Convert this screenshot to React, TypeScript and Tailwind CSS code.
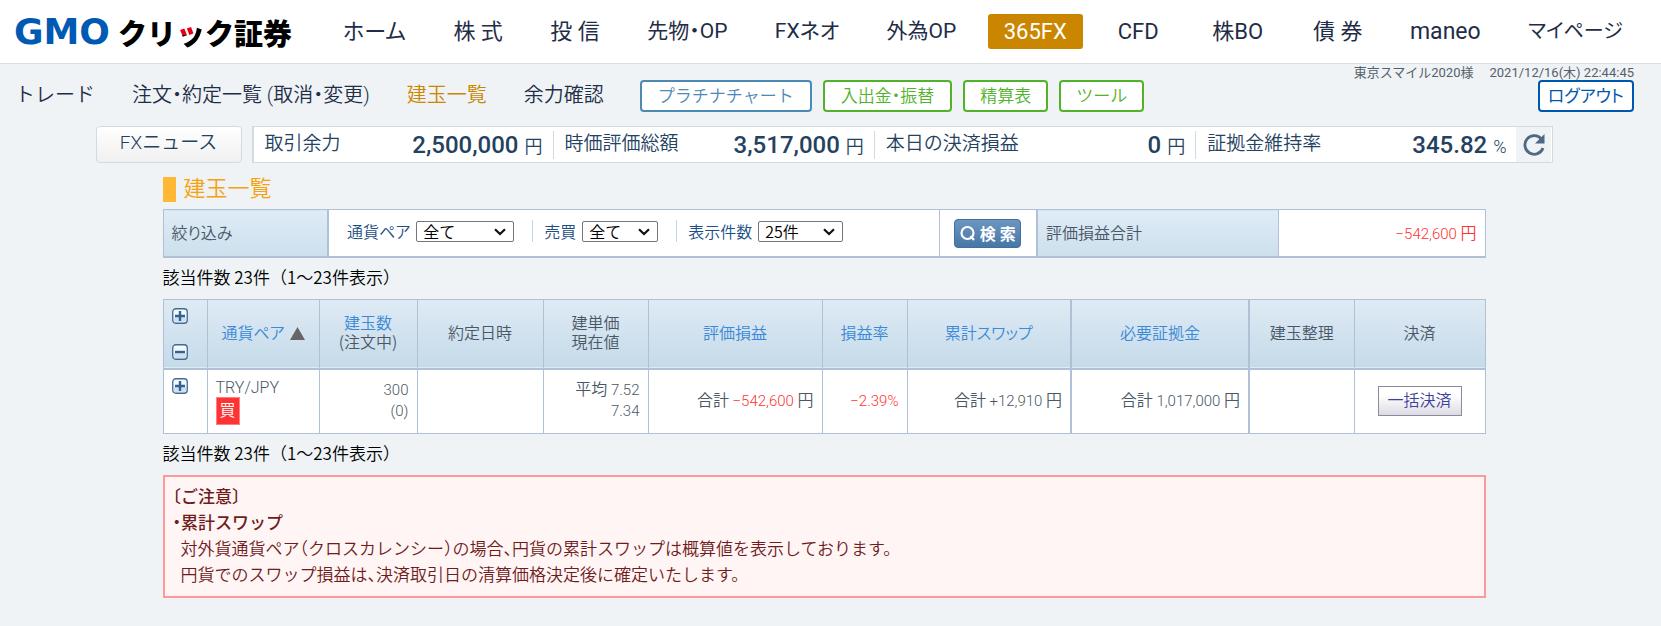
import React from "react";

const NAV = [
  { text: "ホーム", size: "text-[22px]" },
  { text: "株 式", size: "text-[22px]" },
  { text: "投 信", size: "text-[22px]" },
  { text: "先物・OP", size: "text-[21px]" },
  { text: "FXネオ", size: "text-[21px]" },
  { text: "外為OP", size: "text-[21px]" },
  { text: "365FX", size: "text-[22px]" },
  { text: "CFD", size: "min-w-20 text-[22px]" },
  { text: "株BO", size: "min-w-[88px] text-[22px]" },
  { text: "債 券", size: "text-[22px]" },
  { text: "maneo", size: "text-[23px]" },
  { text: "マイページ", size: "text-[20px]" },
];

const SUMMARY = [
  { label: "取引余力", value: "2,500,000", unit: "円", width: "w-[299px]" },
  { label: "時価評価総額", value: "3,517,000", unit: "円", width: "w-[321px] grow" },
  { label: "本日の決済損益", value: "0", unit: "円", width: "w-[321px] grow" },
  { label: "証拠金維持率", value: "345.82", unit: "%", width: "w-[321px] grow" },
];

const PROPORTIONAL = "[font-feature-settings:'palt']";
const HALF_PUNCT = "[font-feature-settings:'halt']";

function Logo() {
  return (
    <a href="#" className="flex w-[278px] shrink-0 items-center whitespace-nowrap leading-none">
      <span className="font-['DejaVu_Sans',sans-serif] text-[36px] leading-8 font-bold text-[#0059b3]">GMO</span>
      <span className="ml-2 font-['Noto_Sans_CJK_JP',sans-serif] text-[29px] leading-8 font-black text-black">
        クリ
        <span className="bg-black bg-[linear-gradient(#e60012,#e60012)] bg-[length:18px_24px] bg-no-repeat bg-clip-text text-transparent">
          ッ
        </span>
        ク証券
      </span>
    </a>
  );
}

function Toggle({ open, label }: { open?: boolean; label: string }) {
  return (
    <button type="button" aria-label={label} className="block size-4">
      <svg viewBox="0 0 16 16" className="size-4">
        <rect x="0.75" y="0.75" width="14.5" height="14.5" rx="3" fill="#f4f9fd" stroke="#3f6b96" strokeWidth="1.3" />
        <path d="M2 9H14V13Q14 14 13 14H3Q2 14 2 13Z" fill="#cfe0ef" />
        <path d={open ? "M3 8H13" : "M3 8H13M8 3V13"} stroke="#33628f" strokeWidth="2.4" />
      </svg>
    </button>
  );
}

function Pick({ id, label, options, width }: { id: string; label: string; options: string[]; width: string }) {
  return (
    <div className="flex items-center gap-[6px]">
      <label htmlFor={id} className={`text-[#1d4f86] ${PROPORTIONAL}`}>{label}</label>
      <div className={`relative ${width}`}>
        <select
          id={id}
          className="block h-[21px] w-full appearance-none rounded-[2px] border border-[#767676] bg-white pl-[6px] text-base leading-[19px] text-black"
        >
          {options.map((o) => (
            <option key={o}>{o}</option>
          ))}
        </select>
        <svg viewBox="0 0 12 8" className="pointer-events-none absolute top-[7px] right-2 h-2 w-3">
          <path d="M1 1.2L6 6L11 1.2" fill="none" stroke="#111" strokeWidth="2.2" />
        </svg>
      </div>
    </div>
  );
}

function Num({ children, red }: { children: React.ReactNode; red?: boolean }) {
  return <span className={`font-['Roboto',sans-serif] text-[15px] ${red ? "text-[#f33]" : ""}`}>{children}</span>;
}

function Count() {
  return (
    <p className="h-6 text-[17px] leading-6 whitespace-nowrap text-black">
      該当件数 23件（1～23件表示）
    </p>
  );
}

const TH = "border border-[#b1c1d5] px-2 pb-[3px] font-[350]";
const TD = "border border-[#b1c1d5] px-2 pb-[2px]";
const ICON_CELL = "border border-[#b1c1d5] px-2";
const SORT = "text-[#3a8ad6]";
const LABEL = "bg-linear-to-b from-[#deecf6] to-[#cddfed] px-2 pb-[2px] text-left font-[350]";

export default function App() {
  return (
    <div className="min-h-screen bg-[#eff3f6] font-['Roboto','Noto_Sans_CJK_JP',sans-serif] text-[#4a5866]">
      <header className="flex h-16 items-center border-b border-[#ddd] bg-white pl-[14px]">
        <Logo />
        <nav className={`flex flex-1 items-center justify-between pr-[22px] pl-[35px] text-center leading-[35px] whitespace-nowrap text-[#1f2d47] ${PROPORTIONAL}`}>
          {NAV.map((n) => (
            <a
              key={n.text}
              href="#"
              aria-current={n.text === "365FX" ? "page" : undefined}
              className={`px-4 ${n.size} leading-[35px] ${n.text === "365FX" ? "rounded-[3px] bg-[#cb8600] text-white" : ""}`}
            >
              {n.text}
            </a>
          ))}
        </nav>
      </header>

      <div className="flex h-[62px] items-start justify-between pr-[27px] pl-[15px]">
        <div className={`flex items-center pt-4 whitespace-nowrap ${HALF_PUNCT}`}>
          <nav className="mr-[36px] flex gap-[37px] pb-[2px] text-xl leading-7 font-[350] text-[#1f2d47]">
            <a href="#">トレード</a>
            <a href="#">注文・約定一覧 (取消・変更)</a>
            <a href="#" aria-current="page" className="text-[#cb8600]">建玉一覧</a>
            <a href="#">余力確認</a>
          </nav>
          <div className="flex gap-[11px] text-[17px] font-[350]">
            <button type="button" className="h-8 rounded border-2 border-[#4b8ab5] bg-white px-4 leading-6 text-[#4b8ab5]">プラチナチャート</button>
            <button type="button" className="h-8 rounded border-2 border-[#52b32b] bg-white px-4 leading-6 text-[#52b32b]">入出金・振替</button>
            <button type="button" className="h-8 rounded border-2 border-[#52b32b] bg-white px-[15px] leading-6 text-[#52b32b]">精算表</button>
            <button type="button" className="h-8 rounded border-2 border-[#52b32b] bg-white px-[15px] leading-6 text-[#52b32b]">ツール</button>
          </div>
        </div>
        <div className="flex flex-col items-end whitespace-nowrap">
          <p className={`flex h-4 gap-4 pt-px text-[13px] leading-4 text-[#555f6b] ${HALF_PUNCT}`}>
            <span>東京スマイル2020様</span>
            <span>2021/12/16(木) 22:44:45</span>
          </p>
          <button type="button" className={`h-8 rounded border-2 border-[#0057ae] bg-white px-2 text-[17px] leading-6 text-[#0057ae] ${PROPORTIONAL}`}>ログアウト</button>
        </div>
      </div>

      <div className="pr-[13px]">
        <div className="mx-auto flex max-w-[1457px] items-stretch gap-[10px] whitespace-nowrap">
          <button type="button" className="h-[37px] w-[146px] shrink-0 rounded border border-[#cfdce7] bg-linear-to-b from-white to-[#f0f0f0] pb-[2px] text-[19px] font-[350] text-[#24425f]">
            FXニュース
          </button>
          <div className="flex flex-1 border border-l-2 border-[#cfdce7] bg-white text-[#24425f]">
            {SUMMARY.map((s, i) => (
              <div key={s.label} className={`flex items-center ${s.width}`}>
                <div className={`flex h-7 flex-1 items-center justify-between pr-[10px] pl-[11px] ${i > 0 ? "border-l border-[#cfdce7]" : ""}`}>
                  <span className="pb-[2px] text-[19px] leading-6 font-[350]">{s.label}</span>
                  <span className="flex items-baseline gap-[6px] pt-[2px] leading-7">
                    <b className="text-2xl leading-7 font-medium">{s.value}</b>
                    <span className="text-lg leading-7 font-[350]">{s.unit}</span>
                  </span>
                </div>
              </div>
            ))}
            <button type="button" aria-label="更新" className="flex w-[35px] shrink-0 items-center justify-center bg-[#eff3f6]">
              <svg viewBox="0 0 24 24" className="size-6">
                <path d="M19.5 6.2A9.3 9.3 0 1 0 21 15" fill="none" stroke="#4d6984" strokeWidth="2.8" />
                <path d="M22.5 1V10.5H13Z" fill="#4d6984" />
              </svg>
            </button>
          </div>
        </div>

        <main className="mx-auto max-w-[1323px] pt-[14px] font-['Noto_Sans_CJK_JP',sans-serif] text-base leading-[19px] font-[350]">
          <h1 className="flex h-[25px] items-center gap-2 text-[22px] leading-6 font-[350] text-[#f7a10d]">
            <span className="h-[25px] w-[13px] bg-[#ffb833]" />
            <span className="pb-2">建玉一覧</span>
          </h1>

          <table className="mt-[7px] h-[49px] w-full table-fixed border-collapse border border-b-2 border-[#b1c1d5] bg-white">
            <colgroup>
              <col className="w-[165px]" />
              <col />
              <col className="w-[98px]" />
              <col className="w-[241px]" />
              <col className="w-[207px]" />
            </colgroup>
            <tbody>
              <tr>
                <th className={`border-r-2 border-[#b1c1d5] ${LABEL} ${PROPORTIONAL}`}>絞り込み</th>
                <td className="border-r border-[#b1c1d5] pb-1 pl-[18px]">
                  <div className="flex items-center">
                    <Pick id="pair" label="通貨ペア" options={["全て"]} width="w-[98px]" />
                    <div className="ml-[18px] h-[22px] w-3 border-l border-[#bfd8f2]" />
                    <Pick id="side" label="売買" options={["全て"]} width="w-[76px]" />
                    <div className="ml-[18px] h-[22px] w-3 border-l border-[#bfd8f2]" />
                    <Pick id="rows" label="表示件数" options={["25件"]} width="w-[85px]" />
                  </div>
                </td>
                <td className="border-r-2 border-[#b1c1d5]">
                  <button type="button" className="mx-auto flex h-[29px] w-[67px] items-center justify-center gap-1 rounded-[4px] border border-[#44709f] bg-linear-to-b from-[#6b96c1] to-[#4877a5] text-base leading-6 font-bold whitespace-nowrap text-white">
                    <svg viewBox="0 0 16 16" className="size-4">
                      <circle cx="7.5" cy="8" r="6" fill="none" stroke="#fff" strokeWidth="2.2" />
                      <path d="M10.5 11L14 15" stroke="#fff" strokeWidth="2.2" />
                    </svg>
                    <span className="flex gap-1"><span>検</span><span>索</span></span>
                  </button>
                </td>
                <th className={`border-r border-[#b1c1d5] ${LABEL}`}>評価損益合計</th>
                <td className="px-2 text-right text-[#f33]">
                  <Num red>−542,600</Num> 円
                </td>
              </tr>
            </tbody>
          </table>

          <div className="pt-[7px] pb-[10px]">
            <Count />
          </div>

          <table className="w-full table-fixed border-collapse bg-white">
            <colgroup>
              <col className="w-[44px]" />
              <col className="w-[112px]" />
              <col className="w-[98px]" />
              <col className="w-[126px]" />
              <col className="w-[105px]" />
              <col className="w-[174px]" />
              <col className="w-[85px]" />
              <col className="w-[164px]" />
              <col className="w-[178px]" />
              <col className="w-[105px]" />
              <col />
            </colgroup>
            <thead>
              <tr className="h-[69px] border-b-2 border-[#b1c1d5] bg-linear-to-b from-[#deebf4] via-[#d2e2ef] to-[#c5dbe9]">
                <th className={ICON_CELL}>
                  <div className="flex flex-col gap-5">
                    <Toggle label="すべて開く" />
                    <Toggle open label="すべて閉じる" />
                  </div>
                </th>
                <th className={`${TH} whitespace-nowrap ${PROPORTIONAL}`}>
                  <a href="#" className={SORT}>通貨ペア</a>
                  <svg viewBox="0 0 15 13" className="ml-[5px] inline-block h-[13px] w-[15px] align-[-1px]">
                    <path d="M7.5 0L15 13H0Z" fill="#666" />
                  </svg>
                </th>
                <th className={`${TH} ${PROPORTIONAL} whitespace-nowrap`}>
                  <a href="#" className={SORT}>建玉数</a>
                  <br />
                  (注文中)
                </th>
                <th className={TH}>約定日時</th>
                <th className={TH}>建単価<br />現在値</th>
                <th className={TH}><a href="#" className={SORT}>評価損益</a></th>
                <th className={TH}><a href="#" className={SORT}>損益率</a></th>
                <th className={`${TH} border-r-2 ${PROPORTIONAL}`}><a href="#" className={SORT}>累計スワップ</a></th>
                <th className={`${TH} border-r-2`}><a href="#" className={SORT}>必要証拠金</a></th>
                <th className={TH}>建玉整理</th>
                <th className={TH}>決済</th>
              </tr>
            </thead>
            <tbody>
              <tr className="h-[65px] whitespace-nowrap">
                <td className={`${ICON_CELL} pt-2 align-top`}><Toggle label="開く" /></td>
                <td className={ICON_CELL}>
                  <div className="font-['Roboto',sans-serif]">TRY/JPY</div>
                  <span className="flex h-7 w-6 items-center justify-center border border-[#ff8080] bg-[#f33] pb-[2px] text-white">買</span>
                </td>
                <td className={`${TD} text-right`}><Num>300<br />(0)</Num></td>
                <td className={TD} />
                <td className={`${TD} text-right`}>平均 <Num>7.52</Num><br /><Num>7.34</Num></td>
                <td className={`${TD} text-right`}>合計 <Num red>−542,600</Num> 円</td>
                <td className={`${TD} text-right`}><Num red>−2.39%</Num></td>
                <td className={`${TD} border-r-2 text-right`}>合計 <Num>+12,910</Num> 円</td>
                <td className={`${TD} border-r-2 text-right`}>合計 <Num>1,017,000</Num> 円</td>
                <td className={TD} />
                <td className={`${ICON_CELL} text-center`}>
                  <button type="button" className="h-[30px] w-[84px] border border-[#8d8a9b] bg-linear-to-b from-white from-30% to-[#dcdbe3] pb-1 text-base leading-6 font-[350] text-[#3f3f9c]">
                    一括決済
                  </button>
                </td>
              </tr>
            </tbody>
          </table>

          <div className="pt-[7px] pb-[10px]">
            <Count />
          </div>

          <section className={`border-2 border-[#ff9999] bg-[#fff5f5] px-2 pt-[6px] pb-[9px] text-[17px] leading-[26px] text-[#701c1c] ${HALF_PUNCT}`}>
            <p className="font-medium">〔ご注意〕</p>
            <p className="font-medium">・累計スワップ</p>
            <div className="pl-2">
              <p>対外貨通貨ペア（クロスカレンシー）の場合、円貨の累計スワップは概算値を表示しております。</p>
              <p>円貨でのスワップ損益は、決済取引日の清算価格決定後に確定いたします。</p>
            </div>
          </section>
        </main>
      </div>
    </div>
  );
}
